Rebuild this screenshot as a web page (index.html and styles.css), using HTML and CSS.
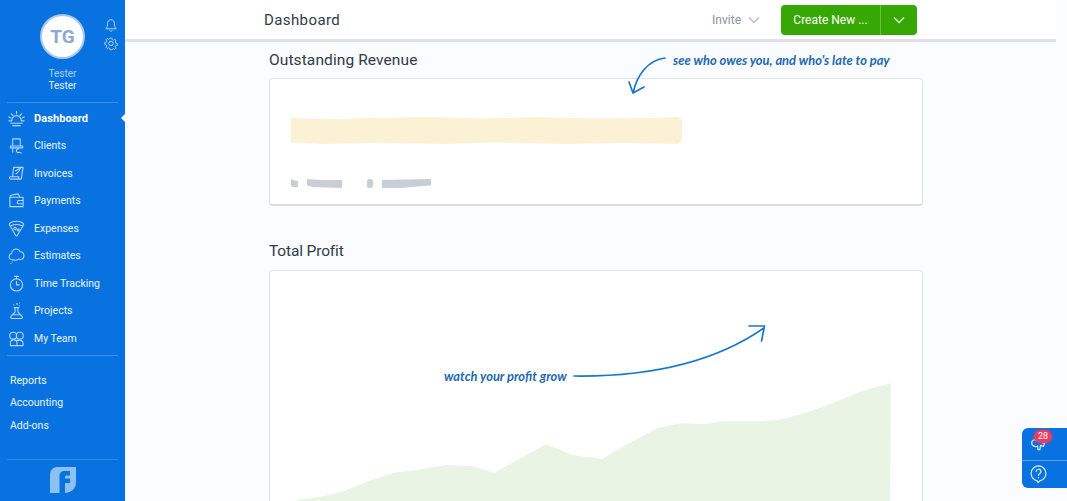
FILE: index.html
```html
<!DOCTYPE html>
<html lang="en">
<head>
<meta charset="utf-8">
<title>Dashboard</title>
<link rel="stylesheet" href="styles.css">
</head>
<body>
<div class="app">
  <aside class="sidebar">
    <div class="profile">
      <div class="avatar">TG</div>
      <div class="profile-tools">
        <svg class="tool" viewBox="0 0 14 14"><path d="M7 1.200C4.800 1.200 3.600 3 3.600 5c0 2.600-.6 4-1.800 5.300h10.400C11 9 10.400 7.600 10.400 5c0-2-1.200-3.800-3.400-3.800zM5.700 12a1.500 1.500 0 0 0 2.600 0"/></svg>
        <svg class="tool" viewBox="0 0 14 14"><circle cx="7" cy="7" r="2.200"/><path d="M6 1h2l.4 1.700 1.300.6 1.500-.9 1.400 1.400-.9 1.500.6 1.300 1.700.4v2l-1.700.4-.6 1.300.9 1.500-1.400 1.400-1.500-.9-1.300.6L8 14H6l-.4-1.700-1.300-.6-1.500.9-1.400-1.400.9-1.500-.6-1.300L0 8V6l1.700-.4.600-1.300-.9-1.500 1.400-1.400 1.500.9 1.300-.6z" transform="translate(.7 .7) scale(.9)"/></svg>
      </div>
      <div class="profile-company">Tester</div>
      <div class="profile-name">Tester</div>
    </div>
    <nav class="main-nav">
      <a class="nav-item active">
        <svg class="nav-icon" viewBox="0 0 18 18"><path d="M4 11a5 5 0 0 1 10 0M1 11.500h3M14 11.500h3M3 14h12M5 16.500h8M9 1.500v2.500M3.500 4l1.800 2M14.500 4l-1.800 2M.8 7.500l2.200 1M17.200 7.500l-2.200 1"/></svg>
        Dashboard
      </a>
      <a class="nav-item">
        <svg class="nav-icon" viewBox="0 0 18 18"><path d="M5 2h8v7.500H5zM2.500 9.500h13v2h-13zM5 11.500v4.500M11 12.500a2 2 0 1 0 1 3.700l2 .8"/></svg>
        Clients
      </a>
      <a class="nav-item">
        <svg class="nav-icon" viewBox="0 0 18 18"><path d="M6 2.500h10l-2 12.500H3a1.500 1.500 0 0 1-1-2.500h9.500M6 2.500L4.800 12.500M11.500 12.500l-.5 2.500M8 6c2-1 3.500-2 5-2.500-.5 2-1.500 3.500-3 4.500L8.500 9.500"/></svg>
        Invoices
      </a>
      <a class="nav-item">
        <svg class="nav-icon" viewBox="0 0 18 18"><path d="M2 5.500h14v10H2zM2 5.500c0-1.500 1-2 2-2.300L11 2l1.500 3.500M11.500 9h4.500v3.500h-4.500a1.700 1.700 0 0 1 0-3.500z"/></svg>
        Payments
      </a>
      <a class="nav-item">
        <svg class="nav-icon" viewBox="0 0 18 18"><path d="M1.500 5C1.300 3.800 2 3.200 3 2.700c3.800-1.700 8.200-1.700 12 0 1 .5 1.700 1.100 1.500 2.300L9.800 16.500a.9.9 0 0 1-1.600 0zM3 6.200c3.700-1.800 8.300-1.800 12 0"/><circle cx="7.500" cy="9" r="1.300"/><circle cx="10.800" cy="10.500" r="1"/></svg>
        Expenses
      </a>
      <a class="nav-item">
        <svg class="nav-icon" viewBox="0 0 18 18"><path d="M5.500 13.500C3 14 1.200 12.400 1.200 10.300c0-1.800 1.100-3 2.600-3.400C4 4 6.500 1.800 9.200 2.200c1.800.3 3 1.400 3.600 2.900 2.300.1 4 1.900 4 4.200 0 2.300-1.700 3.900-3.900 3.900-.7 0-1.300-.1-1.900-.4-.8.8-1.700 1.200-2.900 1.200-1 0-1.900-.2-2.600-.5zM4.500 15.800h.1M3 17.300h.1"/></svg>
        Estimates
      </a>
      <a class="nav-item">
        <svg class="nav-icon" viewBox="0 0 18 18"><circle cx="9" cy="10.500" r="6.500"/><path d="M7 1.500h4M9 1.500V4M9 7v3.500h3"/></svg>
        Time Tracking
      </a>
      <a class="nav-item">
        <svg class="nav-icon" viewBox="0 0 18 18"><path d="M6.500 6h5M7.500 6v4.500L3 15.500a1.300 1.300 0 0 0 1 2h10a1.300 1.300 0 0 0 1-2l-4.500-5V6M5 13.500h8M6 3h.1M9 2h1M12 1h.1M12 4h.1"/></svg>
        Projects
      </a>
      <a class="nav-item">
        <svg class="nav-icon" viewBox="0 0 18 18"><circle cx="5.500" cy="6" r="3.700"/><circle cx="12.500" cy="6" r="3.700"/><path d="M2.500 16.500v-3a3 3 0 0 1 3-3h1a3 3 0 0 1 3 3v3zM9.500 11h3a3.500 3.500 0 0 1 3.500 3.500v2H9.500"/></svg>
        My Team
      </a>
    </nav>
    <nav class="secondary-nav">
      <a class="secondary-item">Reports</a>
      <a class="secondary-item">Accounting</a>
      <a class="secondary-item">Add-ons</a>
    </nav>
    <div class="sidebar-footer">
      <svg class="logo" viewBox="0 0 27 28"><path class="logo-leaf" d="M8 1h19v15c0 7-5 11-12 11H1V9c0-5 3-8 7-8z"/><path class="logo-f" d="M10.500 27V10c0-3 2-5 5-5h5.500v4.500h-3.500c-1 0-1.500.5-1.500 1.500v1.500h5V17h-5v10z"/></svg>
    </div>
  </aside>

  <div class="workspace">
    <header class="topbar">
      <div class="topbar-inner">
        <h1 class="page-title">Dashboard</h1>
        <div class="topbar-actions">
          <button class="invite">Invite
            <svg class="chev" viewBox="0 0 12 8"><path d="M1 1.500l5 5 5-5"/></svg>
          </button>
          <div class="create">
            <span class="create-label">Create New ...</span>
            <span class="create-arrow"><svg class="chev" viewBox="0 0 12 8"><path d="M1 1.500l5 5 5-5"/></svg></span>
          </div>
        </div>
      </div>
    </header>

    <main class="content">
      <section class="panel">
        <div class="section-head">
          <h2 class="section-title">Outstanding Revenue</h2>
          <span class="note note-top">see who owes you, and who's late to pay</span>
          <svg class="arrow-top" viewBox="0 0 50 50"><path d="M42 11C25 13 14 28 10 46M6 35l4 11 11-6"/></svg>
        </div>
        <div class="card revenue-card">
          <div class="highlight-bar"></div>
          <div class="placeholder-row">
            <span class="ph ph-a"></span>
            <span class="ph ph-b"></span>
            <span class="ph ph-c"></span>
            <span class="ph ph-d"></span>
          </div>
        </div>
      </section>

      <section class="panel profit-panel">
        <h2 class="section-title">Total Profit</h2>
        <div class="card profit-card">
          <svg class="chart" viewBox="269 271 654 231">
            <polygon class="chart-area" points="297,505 297,501 320.500,497.700 343.700,492.300 368.900,481.700 394.200,473.700 417.300,470.700 446.800,466 472,467.300 494.300,473.700 545.700,445.300 573,456 602.500,460 621.400,448.300 657.200,429.300 680.400,424.300 703.500,425.300 722.400,422.300 760.300,422.300 783.500,420 810.800,412.300 838.200,401.700 865.500,391 890.800,384.300 890,505"/>
            <path class="chart-arrow" d="M574 377C650 378 715 363 764 329M749 327l15.500 0-3 15"/>
          </svg>
          <span class="note note-profit">watch your profit grow</span>
        </div>
      </section>
    </main>
  </div>
</div>

<div class="help-dock">
  <div class="dock-cell">
    <svg class="dock-icon" viewBox="0 0 20 20"><path d="M3 7a3.500 3.500 0 0 1 4.500-1.500l9 3.500-1.500 3-3-1-.5 4.500h-2L9 11.500A4 4 0 0 1 3 7z"/></svg>
    <span class="dock-badge">28</span>
  </div>
  <div class="dock-cell dock-cell-help">
    <svg class="dock-icon" viewBox="0 0 20 20"><path d="M10 2a8 8 0 0 1 1.500 15.800L9.500 19.500 8.500 17.800A8 8 0 0 1 10 2zM7.500 8a2.500 2.500 0 1 1 3.500 2.300c-.7.400-1 .9-1 1.700M10 14v.6"/></svg>
  </div>
</div>
```

FILE: styles.css
```css
* { box-sizing: border-box; }
html, body { margin: 0; height: 501px; overflow: hidden; }
body { font-family: Roboto, "Liberation Sans", sans-serif; background: #fafcff; color: #2f3b47; }

.app { display: flex; height: 501px; }

/* Sidebar */
.sidebar { width: 125px; flex: none; background: #0873e0; color: #fff; display: flex; flex-direction: column; position: relative; }
.profile { height: 103px; margin: 0 7px; border-bottom: 1px solid #3a90e8; position: relative; display: flex; flex-direction: column; align-items: center; padding-top: 14px; }
.avatar { width: 45px; height: 45px; border-radius: 50%; background: #fff; border: 2px solid #a6c8ee; color: #8ea7d6; font-size: 19px; font-weight: 700; display: flex; align-items: center; justify-content: center; }
.profile-tools { position: absolute; left: 97px; top: 18px; display: flex; flex-direction: column; gap: 3px; }
.tool { width: 14px; height: 15px; fill: none; stroke: #b3d5fa; stroke-width: 1; }
.profile-company { font-size: 10px; color: #a9cdf5; margin-top: 9px; line-height: 12px; }
.profile-name { font-size: 10px; color: #e4f0fd; line-height: 12px; }

.main-nav { display: flex; flex-direction: column; padding-top: 1.500px; border-bottom: 1px solid #3a90e8; margin: 0 7px; padding-bottom: 2.500px; }
.nav-item { height: 27.500px; display: flex; align-items: center; gap: 9px; font-size: 10.500px; color: #e9f3fe; margin-left: -7px; padding-left: 8px; position: relative; }
.nav-item.active { font-size: 11px; font-weight: 700; letter-spacing: .1px; color: #fff; }
.nav-item.active::after { content: ""; position: absolute; right: -7px; top: 50%; margin-top: -4px; border: 4px solid transparent; border-right: 4px solid #fff; border-left: 0; }
.nav-icon { width: 17px; height: 17px; flex: none; fill: none; stroke: #b3d5fa; stroke-width: 1.150; stroke-linecap: round; stroke-linejoin: round; }

.secondary-nav { display: flex; flex-direction: column; padding: 13.500px 0 0 10px; }
.secondary-item { height: 22.500px; display: flex; align-items: center; font-size: 10.500px; color: #e9f3fe; }

.sidebar-footer { margin: auto 7px 0; height: 42px; border-top: 1px solid #2f89e6; display: flex; justify-content: center; padding-top: 6px; }
.logo { width: 27px; height: 28px; }
.logo-leaf { fill: #8ec0f2; }
.logo-f { fill: #0873e0; }

/* Topbar */
.workspace { flex: 1; min-width: 0; display: flex; flex-direction: column; }
.topbar { height: 42px; flex: none; width: 931px; background: #fff; border-bottom: 3px solid #dfe3e8; padding-left: 139px; }
.topbar-inner { width: 653px; height: 39px; display: flex; align-items: center; justify-content: space-between; }
.page-title { margin: 0; font-size: 15px; font-weight: 400; color: #2f3b47; letter-spacing: .4px; }
.topbar-actions { display: flex; align-items: center; gap: 21px; }
.invite { display: flex; align-items: center; gap: 7px; border: 0; padding: 0; background: none; font: inherit; font-size: 12px; color: #8a949e; }
.chev { width: 12px; height: 8px; fill: none; stroke: #b7bfc7; stroke-width: 1.500; }
.create { width: 136px; height: 30px; background: #37a703; border-radius: 4px; display: flex; align-items: center; color: #fff; font-size: 12px; }
.create-label { width: 100px; text-align: center; border-right: 1px solid #6cc143; height: 30px; line-height: 30px; flex: none; }
.create-arrow { flex: 1; display: flex; justify-content: center; }
.create-arrow .chev { stroke: #c9e9b8; stroke-width: 1.600; }

/* Content */
.content { padding: 8px 0 0 144px; flex: 1; min-height: 0; overflow: hidden; }
.panel { width: 654px; }
.section-head { position: relative; z-index: 1; }
.section-title { margin: 0; height: 28px; line-height: 20px; font-size: 15.500px; font-weight: 400; color: #2f3b47; letter-spacing: .1px; }
.profit-panel .section-title { letter-spacing: -.15px; }
.card { background: #fff; border: 1px solid #dfe3e8; border-bottom: 2px solid #d9dde3; border-radius: 4px; position: relative; }
.revenue-card { height: 128px; padding: 38px 0 0 21px; }
.highlight-bar { width: 391px; height: 27px; background: #fbf1d4; clip-path: polygon(0 4%, 12% 8%, 20% 4%, 35% 0, 50% 6%, 62% 0, 78% 6%, 92% 4%, 99% 0, 100% 12%, 100% 88%, 99% 100%, 85% 96%, 70% 100%, 52% 94%, 40% 100%, 22% 96%, 8% 100%, 0 94%); }
.placeholder-row { display: flex; align-items: flex-start; margin-top: 35px; }
.ph { height: 9px; background: #c9ced6; display: block; }
.ph-a { width: 7px; height: 8px; clip-path: polygon(0 0, 100% 30%, 100% 100%, 15% 100%, 0 80%); }
.ph-b { width: 35px; margin-left: 9px; clip-path: polygon(0 0, 40% 10%, 100% 10%, 100% 100%, 15% 90%, 0 70%); }
.ph-c { width: 6px; margin-left: 25px; border-radius: 2px 3px 3px 2px; }
.ph-d { width: 49px; margin-left: 9px; clip-path: polygon(0 10%, 100% 0, 100% 70%, 40% 100%, 0 100%); }

.profit-panel { margin-top: 35px; }
.profit-card { height: 240px; margin-top: 1px; border-bottom: 0; border-radius: 4px 4px 0 0; }
.chart { display: block; position: absolute; left: -1px; top: -1px; width: 654px; height: 231px; }
.chart-area { fill: #eaf4e4; }
.chart-arrow { fill: none; stroke: #1b78c6; stroke-width: 1.700; stroke-linecap: round; stroke-linejoin: round; }

.note { position: absolute; font-family: Lato, "Noto Sans", sans-serif; font-style: italic; font-weight: 700; font-size: 12.900px; color: #1f69ad; white-space: nowrap; }
.note-top { left: 404px; top: 2px; }
.note-profit { left: 174px; top: 97px; }
.arrow-top { position: absolute; left: 354px; top: -3px; width: 50px; height: 50px; fill: none; stroke: #1b78c6; stroke-width: 1.700; stroke-linecap: round; stroke-linejoin: round; }

/* Help dock */
.help-dock { position: absolute; left: 1022px; top: 428px; width: 45px; height: 60px; background: #0873e0; border-radius: 6px 0 0 6px; display: flex; flex-direction: column; }
.dock-cell { flex: 1; position: relative; padding: 7px 0 0 7px; }
.dock-cell + .dock-cell { border-top: 1px solid #5aa2ec; }
.dock-cell-help { padding-top: 3px; }
.dock-icon { width: 19px; height: 19px; fill: none; stroke: #d6e9fc; stroke-width: 1.300; stroke-linecap: round; stroke-linejoin: round; display: block; }
.dock-badge { position: absolute; left: 12px; top: 2px; width: 18px; height: 13px; border-radius: 7px; background: #ef3b5c; color: #fff; font-size: 9px; line-height: 13px; text-align: center; box-shadow: 0 0 0 2px rgba(239, 59, 92, .18); }
```
